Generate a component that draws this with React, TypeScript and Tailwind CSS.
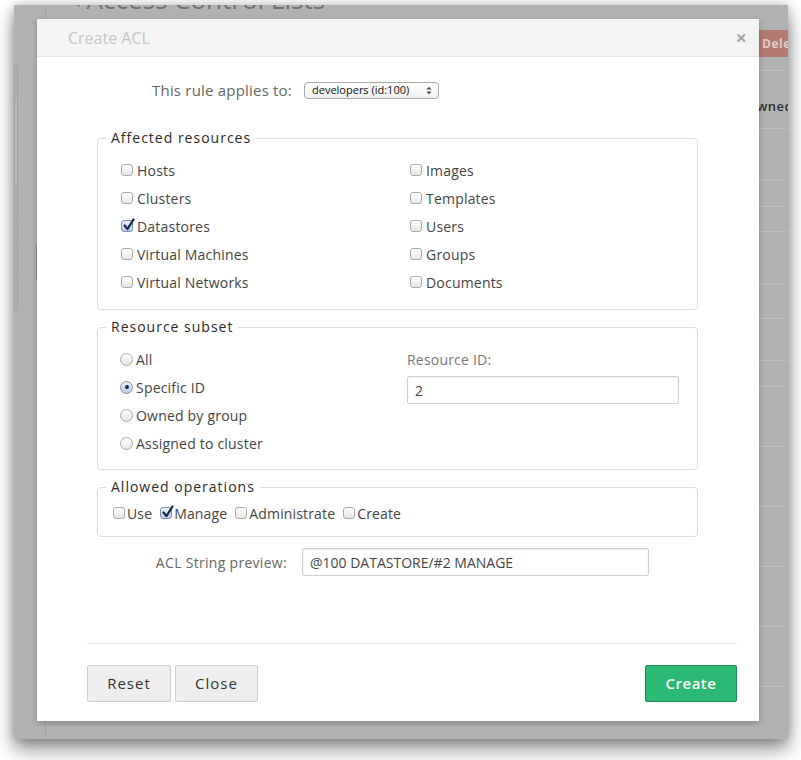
import React from "react";

function Box({ checked }: { checked?: boolean }) {
  return (
    <span
      className={
        "relative inline-block h-[12px] w-[12px] shrink-0 rounded-[3px] border " +
        (checked
          ? "border-[#7f8fa8] bg-linear-to-b from-[#eaf2fc] to-[#b9cde9]"
          : "border-[#a9a9a9] bg-linear-to-b from-white to-[#e6e6e6]")
      }
    >
      {checked && (
        <svg className="absolute left-[1px] top-[-3px]" width="12" height="13" viewBox="0 0 12 13">
          <path d="M1.5 7.5 L4.5 11 L10.5 1.5" fill="none" stroke="#16254a" strokeWidth="2.2" strokeLinecap="round" strokeLinejoin="round" />
        </svg>
      )}
    </span>
  );
}

function Radio({ checked }: { checked?: boolean }) {
  return (
    <span
      className={
        "relative inline-flex h-[13px] w-[13px] shrink-0 items-center justify-center rounded-full border " +
        (checked
          ? "border-[#7f8fa8] bg-linear-to-b from-[#eaf2fc] to-[#b9cde9]"
          : "border-[#a9a9a9] bg-linear-to-b from-white to-[#e6e6e6]")
      }
    >
      {checked && <span className="h-[4px] w-[4px] rounded-full bg-[#1c2540]" />}
    </span>
  );
}

function Check({ label, checked }: { label: string; checked?: boolean }) {
  return (
    <label className="flex h-[28px] items-center gap-[4px] text-[14px] tracking-[0.2px] text-[#444]">
      <Box checked={checked} />
      {label}
    </label>
  );
}

function Legend({ children }: { children: React.ReactNode }) {
  return (
    <legend className="ml-[8px] px-[5px] text-[14px] leading-[20px] font-medium tracking-[1px] text-[#2a2a2a]">
      {children}
    </legend>
  );
}

const leftRes = ["Hosts", "Clusters", "Datastores", "Virtual Machines", "Virtual Networks"];
const rightRes = ["Images", "Templates", "Users", "Groups", "Documents"];
const subsets = ["All", "Specific ID", "Owned by group", "Assigned to cluster"];
const ops = [
  { label: "Use", checked: false },
  { label: "Manage", checked: true },
  { label: "Administrate", checked: false },
  { label: "Create", checked: false },
];
const rowLines = [58, 52, 26, 25, 52, 35, 42, 26, 60, 60, 60, 60, 60, 60];

export default function App() {
  return (
    <div className="h-[760px] w-[801px] overflow-hidden bg-white font-['Open_Sans',sans-serif]">
      {/* window */}
      <div className="relative ml-[14px] mt-[5px] flex h-[734px] w-[774px] overflow-hidden bg-[#b2b2b2] shadow-[0_10px_18px_rgba(0,0,0,0.45),0_0_10px_rgba(0,0,0,0.2)]">
        {/* sidebar */}
        <div className="relative w-[32px] shrink-0 border-r border-[#a3a3a3]">
          <div className="mt-[60px] flex w-[4px] flex-col border border-[#a2a2a2]">
            <div className="h-[32px] border-b border-[#a6a6a6]" />
            <div className="h-[88px] border-b border-[#a6a6a6] bg-[#b9b9b9]" />
            <div className="h-[31px] border-b border-[#a6a6a6]" />
            <div className="h-[31px] border-b border-[#a6a6a6]" />
            <div className="h-[30px] border-b border-[#a6a6a6]" />
            <div className="h-[31px]" />
          </div>
        </div>
        {/* page behind */}
        <div className="relative flex-1">
          <div className="mt-[-19px] flex items-center gap-[6px] pl-[28px] text-[26px] leading-[26px] text-[#6e6e6e]">
            <span className="text-[22px]">‹</span>
            <span>Access Control Lists</span>
          </div>
          <div className="ml-auto mt-[18px] flex h-[27px] w-[29px] items-center bg-[#b37a70] pl-[3px] text-[12px] font-bold tracking-[0.5px] text-[#e0cdc9]">
            Dele
          </div>
          <div className="ml-auto mt-[13px] w-[40px]">
            {rowLines.map((h, i) => (
              <div
                key={i}
                style={{ height: h }}
                className="flex items-end border-t border-[#bdbdbd] pb-[12px] text-[13px] font-semibold tracking-[0.5px] text-[#2e2e2e]"
              >
                {i === 0 ? <span className="-ml-[2px]">Owned</span> : null}
              </div>
            ))}
          </div>
        </div>
        <div className="absolute left-[22px] top-[240px] h-[35px] w-[1px] bg-[#8a8a8a]" />

        {/* modal */}
        <div className="absolute left-[23px] top-[14px] flex h-[702px] w-[722px] flex-col bg-white shadow-[0_2px_6px_rgba(0,0,0,0.25)]">
          <div className="flex h-[38px] shrink-0 items-center justify-between border-b border-[#e6e6e6] bg-[#f4f4f4] pl-[31px] pr-[12px]">
            <span className="text-[16px] text-[#c4c4c4]">Create ACL</span>
            <span className="text-[20px] font-bold leading-none text-[#a8a8a8]">×</span>
          </div>

          <div className="flex flex-1 flex-col pl-[50px] pr-[22px] pt-[25px]">
            <div className="flex flex-col pl-[10px] pr-[39px]">
              <div className="flex h-[17px] items-center">
                <span className="w-[195px] whitespace-nowrap text-right text-[15px] tracking-[0.2px] text-[#666]">This rule applies to:</span>
                <div className="ml-[12px] flex h-[17px] w-[135px] items-center justify-between rounded-[4px] border border-[#a7a7a7] bg-linear-to-b from-white to-[#f0f0f0] pl-[7px] pr-[6px] text-[11px] text-[#111]">
                  <span>developers (id:100)</span>
                  <svg width="6" height="9" viewBox="0 0 6 9">
                    <path d="M0.5 3.5 L3 0.8 L5.5 3.5 Z M0.5 5.5 L3 8.2 L5.5 5.5 Z" fill="#444" />
                  </svg>
                </div>
              </div>

              <fieldset className="mt-[29px] rounded-[4px] border border-[#dcdcdc] pb-[13px] pt-[8px]">
                <Legend>Affected resources</Legend>
                <div className="grid grid-cols-[289px_1fr] pl-[23px]">
                  <div className="flex flex-col">
                    {leftRes.map((r) => (
                      <Check key={r} label={r} checked={r === "Datastores"} />
                    ))}
                  </div>
                  <div className="flex flex-col">
                    {rightRes.map((r) => (
                      <Check key={r} label={r} />
                    ))}
                  </div>
                </div>
              </fieldset>

              <fieldset className="mt-[7px] rounded-[4px] border border-[#dcdcdc] pb-[12px] pt-[8px]">
                <Legend>Resource subset</Legend>
                <div className="grid grid-cols-[287px_1fr] pl-[22px]">
                  <div className="flex flex-col">
                    {subsets.map((s) => (
                      <label key={s} className="flex h-[28px] items-center gap-[3px] text-[14px] tracking-[0.2px] text-[#444]">
                        <Radio checked={s === "Specific ID"} />
                        {s}
                      </label>
                    ))}
                  </div>
                  <div className="flex flex-col">
                    <span className="flex h-[28px] items-center text-[14px] tracking-[0.2px] text-[#777]">Resource ID:</span>
                    <input
                      readOnly
                      value="2"
                      className="mt-[3px] h-[28px] w-[272px] rounded-[2px] border border-[#cfcfcf] px-[7px] text-[14px] text-[#444] shadow-[inset_0_1px_2px_rgba(0,0,0,0.08)] outline-none"
                    />
                  </div>
                </div>
              </fieldset>

              <fieldset className="mt-[7px] rounded-[4px] border border-[#dcdcdc] pb-[13px] pt-[6px]">
                <Legend>Allowed operations</Legend>
                <div className="flex h-[20px] items-center gap-[8px] pl-[15px]">
                  {ops.map((o) => (
                    <label key={o.label} className="flex items-center gap-[2px] text-[14px] tracking-[0.15px] text-[#444]">
                      <Box checked={o.checked} />
                      {o.label}
                    </label>
                  ))}
                </div>
              </fieldset>

              <div className="mt-[11px] flex h-[28px] items-center">
                <span className="w-[190px] whitespace-nowrap text-right text-[14px] tracking-[0.3px] text-[#666]">ACL String preview:</span>
                <input
                  readOnly
                  value="@100 DATASTORE/#2 MANAGE"
                  className="ml-[15px] h-[28px] w-[347px] rounded-[2px] border border-[#cfcfcf] px-[7px] text-[14px] text-[#444] shadow-[inset_0_1px_2px_rgba(0,0,0,0.08)] outline-none"
                />
              </div>
            </div>

            <div className="mt-[67px] border-t border-[#e2e2e2]" />

            <div className="mt-[21px] flex items-center">
              <button className="h-[37px] w-[84px] rounded-[2px] border border-[#cfcfcf] bg-[#eeeeee] text-[15px] tracking-[1px] text-[#333]">
                Reset
              </button>
              <button className="ml-[4px] h-[37px] w-[83px] rounded-[2px] border border-[#cfcfcf] bg-[#eeeeee] text-[15px] tracking-[1px] text-[#333]">
                Close
              </button>
              <button className="ml-auto h-[37px] w-[92px] rounded-[2px] border border-[#1f8a55] bg-[#2bba74] text-[15px] font-semibold tracking-[0.5px] text-white">
                Create
              </button>
            </div>
          </div>
        </div>
      </div>
    </div>
  );
}
